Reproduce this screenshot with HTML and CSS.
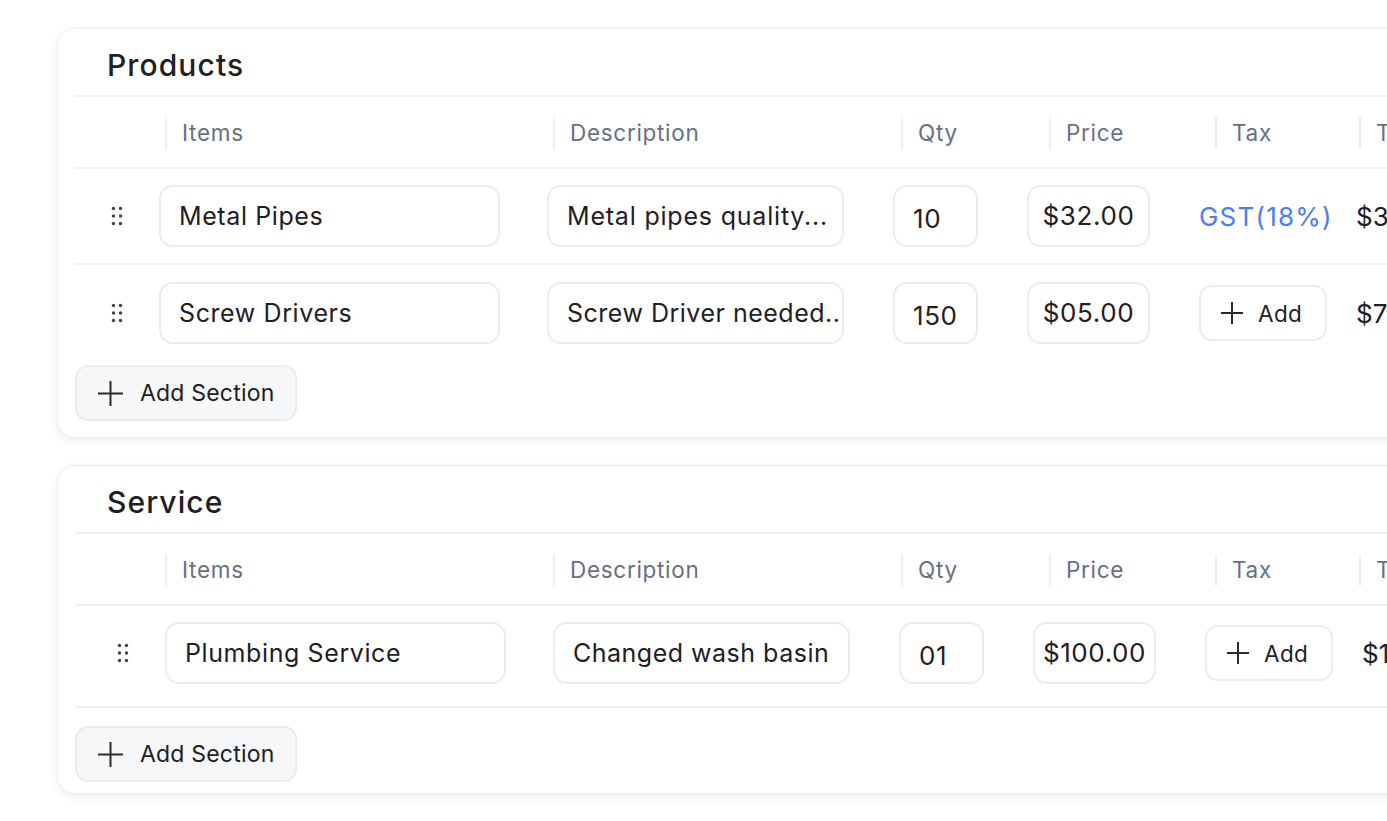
FILE: index.html
```html
<!DOCTYPE html>
<html lang="en">
<head>
<meta charset="utf-8">
<title>Sections</title>
<link rel="stylesheet" href="styles.css">
</head>
<body>
<div class="page">
  <section class="card card-products">
    <h2 class="card-title">Products</h2>
    <div class="table-head">
      <div class="head-spacer"></div>
      <div class="head-cell w-items">Items</div>
      <div class="head-cell w-desc">Description</div>
      <div class="head-cell w-qty">Qty</div>
      <div class="head-cell w-price">Price</div>
      <div class="head-cell w-tax">Tax</div>
      <div class="head-cell w-total">Total</div>
    </div>
    <div class="row row-border">
      <div class="handle"><svg width="12" height="20" viewBox="0 0 12 20"><g fill="#414347"><circle cx="2.5" cy="2.5" r="1.7"/><circle cx="9.5" cy="2.5" r="1.7"/><circle cx="2.5" cy="10" r="1.7"/><circle cx="9.5" cy="10" r="1.7"/><circle cx="2.5" cy="17.5" r="1.7"/><circle cx="9.5" cy="17.5" r="1.7"/></g></svg></div>
      <div class="field f-items">Metal Pipes</div>
      <div class="field f-desc">Metal pipes quality...</div>
      <div class="field f-qty">10</div>
      <div class="field f-price">$32.00</div>
      <div class="tax"><span class="tax-link">GST(18%)</span></div>
      <div class="total">$377.60</div>
    </div>
    <div class="row">
      <div class="handle"><svg width="12" height="20" viewBox="0 0 12 20"><g fill="#414347"><circle cx="2.5" cy="2.5" r="1.7"/><circle cx="9.5" cy="2.5" r="1.7"/><circle cx="2.5" cy="10" r="1.7"/><circle cx="9.5" cy="10" r="1.7"/><circle cx="2.5" cy="17.5" r="1.7"/><circle cx="9.5" cy="17.5" r="1.7"/></g></svg></div>
      <div class="field f-items">Screw Drivers</div>
      <div class="field f-desc f-tight">Screw Driver needed..</div>
      <div class="field f-qty">150</div>
      <div class="field f-price">$05.00</div>
      <div class="tax"><button class="add-btn"><svg width="24" height="24" viewBox="0 0 24 24"><path d="M12 1v22M1 12h22" stroke="#2a2b2e" stroke-width="2" fill="none"/></svg><span>Add</span></button></div>
      <div class="total">$750.00</div>
    </div>
    <button class="section-btn"><svg width="27" height="27" viewBox="0 0 27 27"><path d="M13.5 1v25M1 13.5h25" stroke="#2a2b2e" stroke-width="2" fill="none"/></svg><span>Add Section</span></button>
  </section>

  <section class="card card-service">
    <h2 class="card-title">Service</h2>
    <div class="table-head">
      <div class="head-spacer"></div>
      <div class="head-cell w-items">Items</div>
      <div class="head-cell w-desc">Description</div>
      <div class="head-cell w-qty">Qty</div>
      <div class="head-cell w-price">Price</div>
      <div class="head-cell w-tax">Tax</div>
      <div class="head-cell w-total">Total</div>
    </div>
    <div class="row row-border row-service">
      <div class="handle"><svg width="12" height="20" viewBox="0 0 12 20"><g fill="#414347"><circle cx="2.5" cy="2.5" r="1.7"/><circle cx="9.5" cy="2.5" r="1.7"/><circle cx="2.5" cy="10" r="1.7"/><circle cx="9.5" cy="10" r="1.7"/><circle cx="2.5" cy="17.5" r="1.7"/><circle cx="9.5" cy="17.5" r="1.7"/></g></svg></div>
      <div class="field f-items">Plumbing Service</div>
      <div class="field f-desc f-tight">Changed wash basin</div>
      <div class="field f-qty">01</div>
      <div class="field f-price">$100.00</div>
      <div class="tax"><button class="add-btn"><svg width="24" height="24" viewBox="0 0 24 24"><path d="M12 1v22M1 12h22" stroke="#2a2b2e" stroke-width="2" fill="none"/></svg><span>Add</span></button></div>
      <div class="total">$100.00</div>
    </div>
    <button class="section-btn"><svg width="27" height="27" viewBox="0 0 27 27"><path d="M13.5 1v25M1 13.5h25" stroke="#2a2b2e" stroke-width="2" fill="none"/></svg><span>Add Section</span></button>
  </section>
</div>
</body>
</html>
```

FILE: styles.css
```css
* { box-sizing: border-box; }
html, body { margin: 0; padding: 0; background: #ffffff; overflow: hidden; }
body {
  font-family: Inter, "Noto Sans", "Liberation Sans", sans-serif;
  color: #1f2024;
  width: 1387px;
  height: 821px;
}
.page {
  padding: 28px 0 0 57px;
  display: flex;
  flex-direction: column;
  gap: 27px;
}
.card {
  width: 1420px;
  background: #fff;
  border: 1px solid #efeff1;
  border-radius: 18px;
  box-shadow: 0 3px 10px rgba(0, 0, 0, 0.07);
  padding: 0 0 0 17px;
  display: flex;
  flex-direction: column;
  align-items: flex-start;
}
.card-products { padding-bottom: 16px; }
.card-service { padding-bottom: 11px; }
.card-title {
  margin: 0;
  font-size: 30px;
  font-weight: 500;
  line-height: 34px;
  padding: 19px 0 13px 32px;
  letter-spacing: 1.1px;
  width: 100%;
  border-bottom: 2px solid #f0f0f2;
}
.table-head {
  display: flex;
  align-items: center;
  height: 72px;
  padding-top: 2px;
  width: 100%;
  border-bottom: 2px solid #f0f0f2;
}
.head-spacer { width: 90px; flex: none; }
.head-cell {
  flex: none;
  height: 32px;
  border-left: 2px solid #eceef1;
  padding-left: 15px;
  font-size: 22.5px;
  line-height: 32px;
  color: #687083;
  letter-spacing: 0.7px;
}
.w-items { width: 388px; }
.w-desc { width: 348px; }
.w-qty { width: 148px; }
.w-price { width: 166px; }
.w-tax { width: 144px; }
.w-total { width: 120px; }
.row {
  display: flex;
  align-items: center;
  height: 96px;
  width: 100%;
}
.row-border { border-bottom: 2px solid #f0f0f2; }
.row-service { height: 102px; padding-left: 6px; padding-bottom: 6px; }
.handle {
  width: 84px;
  flex: none;
  display: flex;
  justify-content: center;
}
.handle svg { display: block; }
.field {
  flex: none;
  height: 62px;
  border: 2px solid #ececee;
  border-radius: 14px;
  padding: 0 0 0 18px;
  font-size: 25px;
  line-height: 58px;
  letter-spacing: 0.6px;
  white-space: nowrap;
  overflow: hidden;
  color: #1f2024;
}
.f-items { width: 341px; margin-right: 47px; }
.f-desc { width: 297px; margin-right: 49px; letter-spacing: 0.8px; }
.f-desc.f-tight { letter-spacing: 0.5px; }
.f-qty { width: 85px; margin-right: 49px; font-size: 26px; line-height: 63px; }
.f-price { width: 123px; margin-right: 49px; padding: 0; text-align: center; font-size: 26px; }
.tax {
  flex: none;
  width: 157px;
  display: flex;
  align-items: center;
}
.tax-link {
  color: #4a7cf6;
  font-size: 26px;
  letter-spacing: 1.2px;
}
.add-btn {
  display: flex;
  align-items: center;
  gap: 14px;
  height: 56px;
  width: 128px;
  padding: 0 0 0 19px;
  border: 2px solid #ececee;
  border-radius: 13px;
  background: #fff;
  font-family: inherit;
  font-size: 22.5px;
  color: #1f2024;
  letter-spacing: 0.4px;
  cursor: pointer;
}
.add-btn svg, .section-btn svg { display: block; flex: none; }
.total {
  flex: none;
  font-size: 26px;
  white-space: nowrap;
  color: #1f2024;
}
.section-btn {
  display: flex;
  align-items: center;
  gap: 16px;
  margin-top: 4px;
  height: 56px;
  width: 222px;
  padding: 0 0 0 20px;
  border: 2px solid #ececef;
  border-radius: 13px;
  background: #f6f7f9;
  font-family: inherit;
  font-size: 23px;
  color: #1f2024;
  letter-spacing: 0.2px;
  cursor: pointer;
}
.card-service .section-btn { margin-top: 18px; }
```
